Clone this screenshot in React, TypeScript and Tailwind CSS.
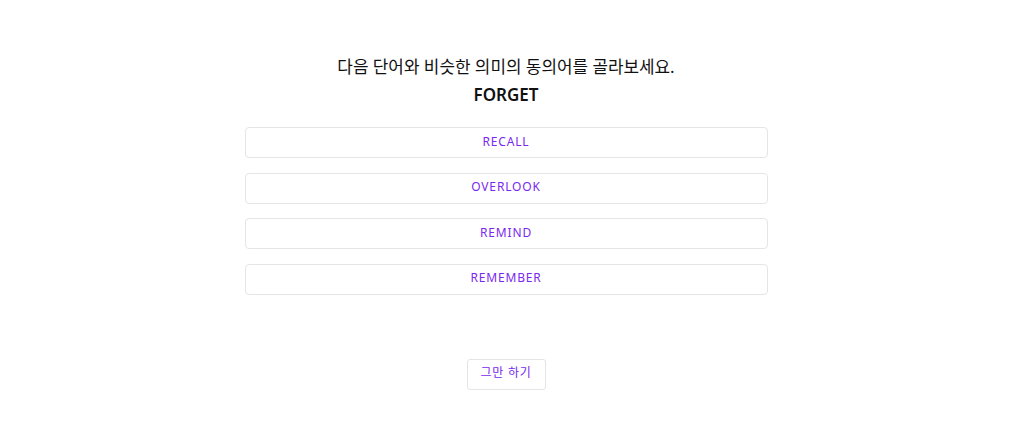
import React from 'react';

const options = ['RECALL', 'OVERLOOK', 'REMIND', 'REMEMBER'];

const font = { fontFamily: '"Noto Sans", "Noto Sans CJK KR", sans-serif' };

export default function App() {
  return (
    <div className="min-h-[426px] w-full bg-white pr-[12px]" style={font}>
      <div className="flex flex-col items-center pt-[54px]">
        {/* Question */}
        <h2 className="text-[16.9px] leading-[25px] text-[#111] font-normal">
          다음 단어와 비슷한 의미의 동의어를 골라보세요.
        </h2>
        <h1 className="mt-[3px] text-[17px] leading-[25px] font-semibold text-[#111]">FORGET</h1>

        {/* Choices */}
        <div className="mt-[20px] flex w-[523px] flex-col gap-[14.5px]">
          {options.map((opt) => (
            <button
              key={opt}
              className="h-[31px] w-full rounded-[4px] border border-[#e5e5e5] bg-white pb-[2px] text-[12px] font-normal tracking-[0.07em] text-[#7a28f0]"
            >
              {opt}
            </button>
          ))}
        </div>

        {/* Stop */}
        <button className="mt-[64px] h-[31px] w-[79px] rounded-[3px] border border-[#e5e5e5] bg-white pb-[2px] text-[12px] font-normal tracking-[0.06em] text-[#7a28f0]">
          그만 하기
        </button>
      </div>
    </div>
  );
}
